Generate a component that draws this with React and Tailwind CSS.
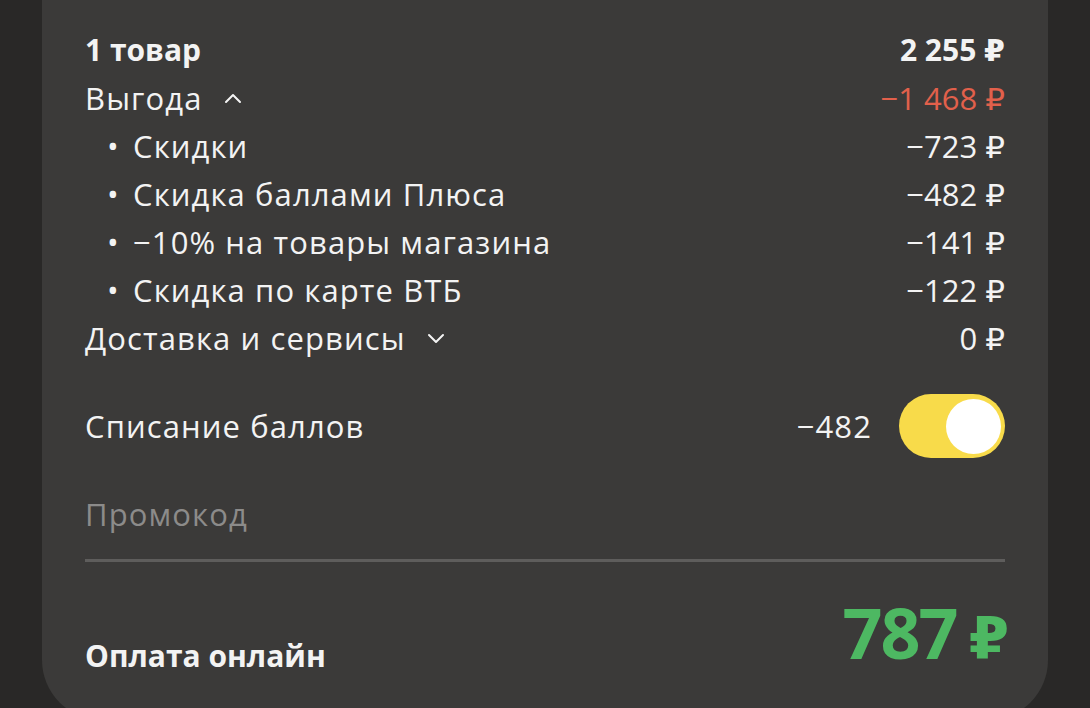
import React from "react";

const font = { fontFamily: '"Open Sans", "DejaVu Sans", sans-serif' };

function Chevron({ up }) {
  return (
    <svg width="20" height="12" viewBox="0 0 20 12" className="ml-[20px]" fill="none">
      <path
        d={up ? "M3 10 L10 3 L17 10" : "M3 3 L10 10 L17 3"}
        stroke="#f4f4f4"
        strokeWidth="2"
        strokeLinecap="round"
        strokeLinejoin="round"
      />
    </svg>
  );
}

function Row({ left, right, bold, rightClass = "text-[#f3f3f3]" }) {
  return (
    <div className="flex h-[48px] items-center justify-between">
      <div className={`flex items-center ${bold ? "text-[30px] font-bold tracking-normal" : ""}`}>{left}</div>
      <div className={`tracking-normal ${bold ? "text-[30px] font-bold" : ""} ${rightClass}`}>{right}</div>
    </div>
  );
}

function Bullet({ children }) {
  return (
    <span className="flex items-center">
      <span className="w-[48px] pl-[22px]">•</span>
      {children}
    </span>
  );
}

export default function App() {
  return (
    <div className="h-[708px] w-[1090px] overflow-hidden bg-[#292827]" style={font}>
      <div className="mx-[42px] h-[720px] rounded-b-[60px] bg-[#3b3a39] px-[43px] pt-[26px] text-[31px] leading-[48px] tracking-[1.1px] text-[#f3f3f3]">
        <Row bold left="1 товар" right="2 255 ₽" />
        <Row
          left={
            <>
              Выгода
              <Chevron up />
            </>
          }
          right="−1 468 ₽"
          rightClass="text-[#e2604b]"
        />
        <Row left={<Bullet>Скидки</Bullet>} right="−723 ₽" />
        <Row left={<Bullet>Скидка баллами Плюса</Bullet>} right="−482 ₽" />
        <Row left={<Bullet>−10% на товары магазина</Bullet>} right="−141 ₽" />
        <Row left={<Bullet>Скидка по карте ВТБ</Bullet>} right="−122 ₽" />
        <Row
          left={
            <>
              Доставка и сервисы
              <Chevron />
            </>
          }
          right="0 ₽"
        />

        <div className="mt-[32px] flex h-[64px] items-center justify-between">
          <span>Списание баллов</span>
          <div className="flex items-center gap-[27px]">
            <span>−482</span>
            <div className="flex h-[64px] w-[106px] items-center justify-end rounded-full bg-[#f8db4a] pr-[4px]">
              <div className="h-[55px] w-[55px] rounded-full bg-white" />
            </div>
          </div>
        </div>

        <div className="mt-[32px] h-[48px] text-[#8c8b8a]">Промокод</div>
        <div className="mt-[21px] h-[3px] bg-[#5e5d5c]" />

        <div className="mt-[30px] flex items-end justify-between">
          <span className="mb-[-3px] text-[30px] font-bold tracking-normal">Оплата онлайн</span>
          <span className="mr-[-4px] flex items-baseline font-bold leading-[80px] tracking-normal text-[#4db862]">
            <span className="text-[70px] tracking-[-2px]">787</span>
            <span className="ml-[12px] text-[58px]">₽</span>
          </span>
        </div>
      </div>
    </div>
  );
}
